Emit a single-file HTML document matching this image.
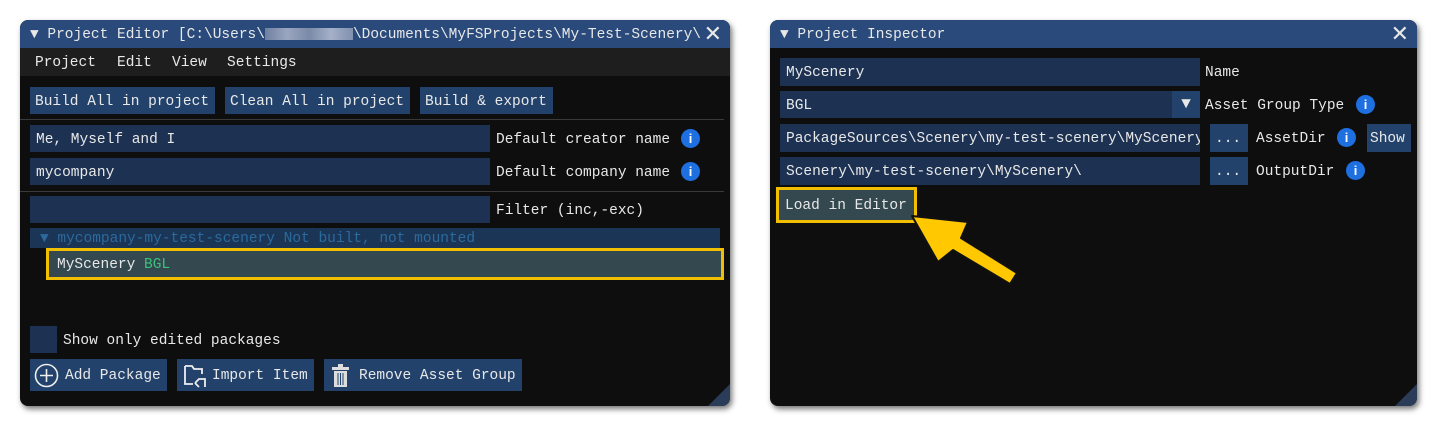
<!DOCTYPE html>
<html><head><meta charset="utf-8"><style>
*{margin:0;padding:0;box-sizing:border-box}
body{width:1437px;height:427px;background:#fff;position:relative;overflow:hidden;font-family:"Liberation Mono",monospace;font-size:14.5px;color:#e8e8e8}
div,span{position:absolute;white-space:nowrap}
.win{background:#0e0e0e;border-radius:8px;box-shadow:2px 3px 6px rgba(0,0,0,.55);overflow:hidden}
.title{left:0;top:0;right:0;height:28px;background:#294a7a;line-height:30px;padding-left:10px}
.in{background:#1d3252;height:27px;line-height:30px;padding-left:6px;overflow:hidden}
.btn{background:#22426b;height:27px;line-height:30px;padding-left:5px}
.lbl{line-height:30px;height:27px}
.info{width:19px;height:19px;border-radius:50%;background:#1e6fe0;color:#fff;font:bold 13px "Liberation Sans",sans-serif;text-align:center;line-height:19px}
.sep{height:1px;background:#3a3a3a}
.grip{width:0;height:0;border-left:22px solid transparent;border-bottom:22px solid #2a3c58;right:0;bottom:0}
.x{font:22px "Liberation Sans",sans-serif;line-height:28px}
</style></head><body>

<div class="win" style="left:20px;top:20px;width:710px;height:386px">
 <div class="title">▼ Project Editor [C:\Users\<span style="position:relative;display:inline-block;width:88px;height:12px;background:linear-gradient(90deg,#6f80a0,#9aa6c0,#7a8aa8,#a5b0c8,#8090b0);vertical-align:middle"></span>\Documents\MyFSProjects\My-Test-Scenery\</div>
 <div class="x" style="right:8px;top:0">✕</div>
 <div style="left:0;top:28px;width:710px;height:28px;background:#1e1e1e"></div>
 <div style="left:15px;top:28px;line-height:31px">Project</div>
 <div style="left:97px;top:28px;line-height:31px">Edit</div>
 <div style="left:152px;top:28px;line-height:31px">View</div>
 <div style="left:207px;top:28px;line-height:31px">Settings</div>
 <div class="btn" style="left:10px;top:67px;width:185px">Build All in project</div>
 <div class="btn" style="left:205px;top:67px;width:185px">Clean All in project</div>
 <div class="btn" style="left:400px;top:67px;width:133px">Build &amp; export</div>
 <div class="sep" style="left:0;top:99px;width:704px"></div>
 <div class="in" style="left:10px;top:105px;width:460px">Me, Myself and I</div>
 <div class="lbl" style="left:476px;top:105px">Default creator name</div>
 <div class="info" style="left:661px;top:109px">i</div>
 <div class="in" style="left:10px;top:138px;width:460px">mycompany</div>
 <div class="lbl" style="left:476px;top:138px">Default company name</div>
 <div class="info" style="left:661px;top:142px">i</div>
 <div class="sep" style="left:0;top:171px;width:704px"></div>
 <div class="in" style="left:10px;top:176px;width:460px"></div>
 <div class="lbl" style="left:476px;top:176px">Filter (inc,-exc)</div>
 <div style="left:10px;top:208px;width:690px;height:20px;background:#1b3556;line-height:22px;padding-left:10px;color:#2c6a9c">▼ mycompany-my-test-scenery Not built, not mounted</div>
 <div style="left:26px;top:228px;width:678px;height:32px;border:3px solid #f2be00;background:#33484f;line-height:29px;padding-left:8px">MyScenery <span style="position:static;color:#3cc27c">BGL</span></div>
 <div style="left:10px;top:306px;width:27px;height:27px;background:#1d3252"></div>
 <div class="lbl" style="left:43px;top:306px">Show only edited packages</div>
 <div class="btn" style="left:10px;top:339px;width:137px;height:32px;line-height:34px;padding-left:35px">Add Package</div>
 <svg style="position:absolute;left:14px;top:343px" width="25" height="25"><circle cx="12.5" cy="12.5" r="11" fill="none" stroke="#eee" stroke-width="1.6"/><path d="M12.5 6v13M6 12.5h13" stroke="#eee" stroke-width="1.6"/></svg>
 <div class="btn" style="left:157px;top:339px;width:137px;height:32px;line-height:34px;padding-left:35px">Import Item</div>
 <svg style="position:absolute;left:162px;top:343px" width="28" height="26"><path d="M3 3h7l2 3h8v5M3 3v18h8" fill="none" stroke="#eee" stroke-width="1.8"/><path d="M13 20l4-4h6v8M13 20l4 4" fill="none" stroke="#eee" stroke-width="1.8"/></svg>
 <div class="btn" style="left:304px;top:339px;width:198px;height:32px;line-height:34px;padding-left:35px">Remove Asset Group</div>
 <svg style="position:absolute;left:311px;top:344px" width="20" height="24"><rect x="1" y="3" width="17" height="3" fill="#ddd"/><rect x="7" y="0" width="5" height="3" fill="#ddd"/><rect x="3" y="7" width="13" height="16" fill="#ddd"/><path d="M7 9v12M9.5 9v12M12 9v12" stroke="#22426b" stroke-width="1"/></svg>
 <div class="grip"></div>
</div>

<div class="win" style="left:770px;top:20px;width:647px;height:386px">
 <div class="title">▼ Project Inspector</div>
 <div class="x" style="right:8px;top:0">✕</div>
 <div class="in" style="left:10px;top:38px;width:420px;height:28px;line-height:31px">MyScenery</div>
 <div class="lbl" style="left:435px;top:38px">Name</div>
 <div class="in" style="left:10px;top:71px;width:420px">BGL</div>
 <div style="left:402px;top:71px;width:28px;height:27px;background:#22426b;text-align:center;line-height:27px;font-size:16px">▼</div>
 <div class="lbl" style="left:435px;top:71px">Asset Group Type</div>
 <div class="info" style="left:586px;top:75px">i</div>
 <div class="in" style="left:10px;top:104px;width:420px;height:28px;line-height:31px">PackageSources\Scenery\my-test-scenery\MyScenery\</div>
 <div class="btn" style="left:440px;top:104px;width:38px;height:28px;line-height:31px">...</div>
 <div class="lbl" style="left:486px;top:104px">AssetDir</div>
 <div class="info" style="left:567px;top:108px">i</div>
 <div class="btn" style="left:597px;top:104px;width:44px;height:28px;line-height:31px;padding-left:3px">Show</div>
 <div class="in" style="left:10px;top:137px;width:420px;height:28px;line-height:31px">Scenery\my-test-scenery\MyScenery\</div>
 <div class="btn" style="left:440px;top:137px;width:38px;height:28px;line-height:31px">...</div>
 <div class="lbl" style="left:486px;top:137px">OutputDir</div>
 <div class="info" style="left:576px;top:141px">i</div>
 <div style="left:6px;top:167px;width:141px;height:36px;border:3px solid #f2be00;background:#33484f;line-height:33px;padding-left:6px">Load in Editor</div>
 <div class="grip"></div>
</div>

<svg style="position:absolute;left:880px;top:195px" width="150" height="95">
 <path d="M32 21 L88 27 L81 43 L137 78 L130 89 L73 55 L58 67 Z" fill="#ffc800" stroke="#111" stroke-width="2" stroke-linejoin="round"/>
</svg>
</body></html>
